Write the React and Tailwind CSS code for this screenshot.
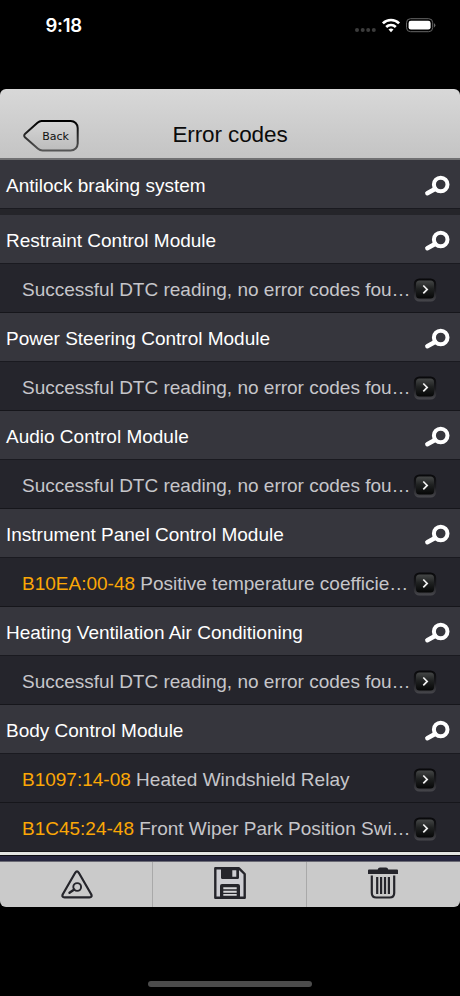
const modules = [
    {
        name: "Restraint Control Module",
        codes: [{ text: "Successful DTC reading, no error codes fou…" }],
    },
    {
        name: "Power Steering Control Module",
        codes: [{ text: "Successful DTC reading, no error codes fou…" }],
    },
    {
        name: "Audio Control Module",
        codes: [{ text: "Successful DTC reading, no error codes fou…" }],
    },
    {
        name: "Instrument Panel Control Module",
        codes: [{ code: "B10EA:00-48", text: "Positive temperature coefficie…" }],
    },
    {
        name: "Heating Ventilation Air Conditioning",
        codes: [{ text: "Successful DTC reading, no error codes fou…" }],
    },
    {
        name: "Body Control Module",
        codes: [
            { code: "B1097:14-08", text: "Heated Windshield Relay" },
            { code: "B1C45:24-48", text: "Front Wiper Park Position Swi…" },
        ],
    },
];

function StatusBar() {
    return (
        <div className="flex h-[89px] items-start justify-between pl-[45.5px] pr-[24px]">
            <span className="mt-[12px] font-['Inter'] text-[18.5px] leading-[27px] font-semibold tracking-[-0.3px] text-white">
                9:18
            </span>
            <svg className="mt-[15px]" width="82" height="20" viewBox="0 0 82 20">
                <g fill="#3c3c3c">
                    <circle cx="3" cy="15" r="2" />
                    <circle cx="8.7" cy="15" r="2" />
                    <circle cx="14.2" cy="15" r="2" />
                    <circle cx="19.8" cy="15" r="2" />
                </g>
                <g fill="none" stroke="#fff" strokeWidth="2.6">
                    <path d="M28.9 8.4a11.4 11.4 0 0 1 16.2 0" />
                    <path d="M32.2 12a6.8 6.8 0 0 1 9.6 0" />
                </g>
                <path d="M37 17.2l-2.5-2.6a3.6 3.6 0 0 1 5 0z" fill="#fff" />
                <rect x="52.5" y="3.7" width="26.2" height="13" rx="4" fill="none" stroke="#666" />
                <rect x="54.6" y="5.8" width="22" height="8.8" rx="2.3" fill="#fff" />
                <path d="M80 8.2v4.2a2.3 2.3 0 0 0 0-4.2z" fill="#666" />
            </svg>
        </div>
    );
}

function BackButton() {
    return (
        <button className="relative h-[34px] w-[58px]">
            <svg className="absolute inset-0" width="58" height="34" viewBox="0 0 58 34">
                <defs>
                    <linearGradient id="backStroke" x1="0" y1="0" x2="0" y2="1">
                        <stop offset="0" stopColor="#000" />
                        <stop offset="0.5" stopColor="#2a2a2a" />
                        <stop offset="1" stopColor="#555" />
                    </linearGradient>
                    <linearGradient id="backFill" x1="0" y1="0" x2="0" y2="1">
                        <stop offset="0" stopColor="#d6d6d6" />
                        <stop offset="1" stopColor="#bcbcbc" />
                    </linearGradient>
                </defs>
                <path
                    d="M19.5 2H48.700a7 7 0 0 1 7 7v15.500a7 7 0 0 1-7 7H20.500q-2.500 0-4.500-1.700L3.200 18.600q-2-1.900 0-3.800L15.500 3.800Q17.500 2 19.500 2z"
                    fill="url(#backFill)"
                    stroke="url(#backStroke)"
                    strokeWidth="2"
                />
            </svg>
            <span className="relative top-px ml-[9px] font-['DejaVu_Sans'] text-[11px] leading-[34px] text-[#111]">Back</span>
        </button>
    );
}

function Magnifier() {
    return (
        <svg className="mt-[3px] shrink-0" width="26" height="22" viewBox="0 0 26 22" fill="none" stroke="#fff">
            <circle cx="16.700" cy="9.500" r="6.800" strokeWidth="4" />
            <path d="M11 14L3.300 18.200" strokeWidth="4.400" strokeLinecap="round" />
        </svg>
    );
}

function ArrowBadge() {
    return (
        <svg className="mt-[4px] shrink-0" width="24" height="24" viewBox="0 0 24 24" fill="none">
            <defs>
                <linearGradient id="badgeEdge" x1="0" y1="0" x2="0" y2="1">
                    <stop offset="0" stopColor="#08080a" />
                    <stop offset="0.550" stopColor="#1c1c20" />
                    <stop offset="1" stopColor="#48484d" />
                </linearGradient>
                <linearGradient id="badgeFace" x1="0" y1="0" x2="0" y2="1">
                    <stop offset="0" stopColor="#444646" />
                    <stop offset="0.450" stopColor="#202222" />
                    <stop offset="1" stopColor="#050606" />
                </linearGradient>
            </defs>
            <rect x="0.800" y="0.500" width="22.400" height="23" rx="5.500" fill="url(#badgeEdge)" />
            <rect x="3" y="2.500" width="18" height="18" rx="3.500" fill="url(#badgeFace)" />
            <path d="M10.300 7.500L14.200 11.400L10.300 15.300" stroke="#f2f2f2" strokeWidth="1.700" />
        </svg>
    );
}

function ModuleRow({ name }) {
    return (
        <div className="flex h-[49px] items-center justify-between border-b border-[#1a1a20] bg-[#36363d] pl-[6px] pr-[10px]">
            <span className="pt-[3px] text-[19px] leading-6 whitespace-nowrap text-white">{name}</span>
            <Magnifier />
        </div>
    );
}

function CodeRow({ code, text }) {
    return (
        <div className="flex h-[49px] items-center justify-between border-b border-[#16161b] bg-[#25252c] pl-[22px] pr-[23px]">
            <span className="pt-[3px] text-[19px] leading-6 whitespace-nowrap text-[#c6c6ca]">
                {code && <span className="text-[#fba706]">{code} </span>}
                {text}
            </span>
            <ArrowBadge />
        </div>
    );
}

function WarningIcon() {
    return (
        <svg width="32" height="30" viewBox="0 0 32 30" fill="none" stroke="#25252b" strokeLinejoin="round">
            <path d="M14.200 2.800q1.800-2.700 3.600 0L30.200 24.300q1.300 3-1.700 3H3.500q-3 0-1.700-3z" strokeWidth="2.200" />
            <circle cx="16.200" cy="17" r="3.900" strokeWidth="1.900" />
            <path d="M13.200 19.500L8.500 22.700" strokeWidth="2.400" strokeLinecap="round" />
        </svg>
    );
}

function SaveIcon() {
    return (
        <svg width="32" height="32" viewBox="0 0 32 32">
            <path d="M1.300 1.300H25L30.700 7V30.700H1.300z" fill="#cdcdd2" stroke="#25252b" strokeWidth="2.400" strokeLinejoin="round" />
            <path d="M7 1H25v9.500q0 1.500-1.500 1.500H8.500Q7 12 7 10.500z" fill="#25252b" />
            <path d="M18.300 3.300h4v6.400h-4z" fill="#cdcdd2" />
            <path d="M6 31V19q0-2 2-2H24q2 0 2 2V31z" fill="#25252b" />
            <path d="M9.300 20.300h13.400v2H9.300zM9.300 23.700h13.400v2H9.300zM9.300 27.100h13.400v1.700H9.300z" fill="#d5d5d8" />
        </svg>
    );
}

function TrashIcon() {
    return (
        <svg width="30" height="32" viewBox="0 0 30 32" fill="none" stroke="#25252b">
            <path d="M0 3.500Q0 2.500 1 2.500H9.700Q10.200.5 12 .5h6q1.800 0 2.300 2H29q1 0 1 1V7H0z" fill="#25252b" stroke="none" />
            <path d="M3.800 8.500V26q0 4.500 4.500 4.500h13.400q4.500 0 4.500-4.500V8.500" strokeWidth="2.200" />
            <path d="M9.200 10v17M13.100 10v17M17 10v17M20.900 10v17" strokeWidth="2.200" />
        </svg>
    );
}

function Toolbar() {
    return (
        <div className="grid h-[45px] grid-cols-[153px_154px_153px] bg-[#cacaca]">
            <button className="flex items-start justify-center border-r border-[#a9a9a9] pt-[8px] pl-px">
                <WarningIcon />
            </button>
            <button className="flex items-start justify-center border-r border-[#a9a9a9] pt-[5px]">
                <SaveIcon />
            </button>
            <button className="flex items-start justify-center pt-[5px] pr-px">
                <TrashIcon />
            </button>
        </div>
    );
}

export default function App() {
    return (
        <div className="flex h-[996px] w-[460px] flex-col overflow-hidden bg-black font-['Liberation_Sans',sans-serif]">
            <StatusBar />
            <div className="flex h-[818px] flex-col overflow-hidden rounded-[6px]">
                <header className="grid h-[71px] grid-cols-[1fr_auto_1fr] border-b-2 border-[#707072] bg-linear-to-b from-[#d8d8d8] to-[#c4c4c4]">
                    <div className="pt-[30px] pl-[22px]">
                        <BackButton />
                    </div>
                    <h1 className="pt-[32px] text-[22.5px] leading-[28px] tracking-[-0.1px] text-[#0b0b0b]">Error codes</h1>
                </header>

                <ModuleRow name="Antilock braking system" />
                <div className="h-[6px] shrink-0 bg-[#25252a]" />

                {modules.map((mod) => (
                    <div key={mod.name}>
                        <ModuleRow name={mod.name} />
                        {mod.codes.map((item, i) => (
                            <CodeRow key={i} {...item} />
                        ))}
                    </div>
                ))}

                {/* Divider stripes above the toolbar */}
                <div className="h-[3px] shrink-0 bg-[#e2e4e2]" />
                <div className="h-[7px] shrink-0 border-t border-b border-t-[#0c0c12] border-b-[#6a6a74] bg-[#26263e]" />
                <Toolbar />
            </div>
            <div className="flex grow items-start justify-center pt-[74px]">
                <div className="h-[6px] w-[164px] rounded-full bg-[#4c4c4c]" />
            </div>
        </div>
    );
}
